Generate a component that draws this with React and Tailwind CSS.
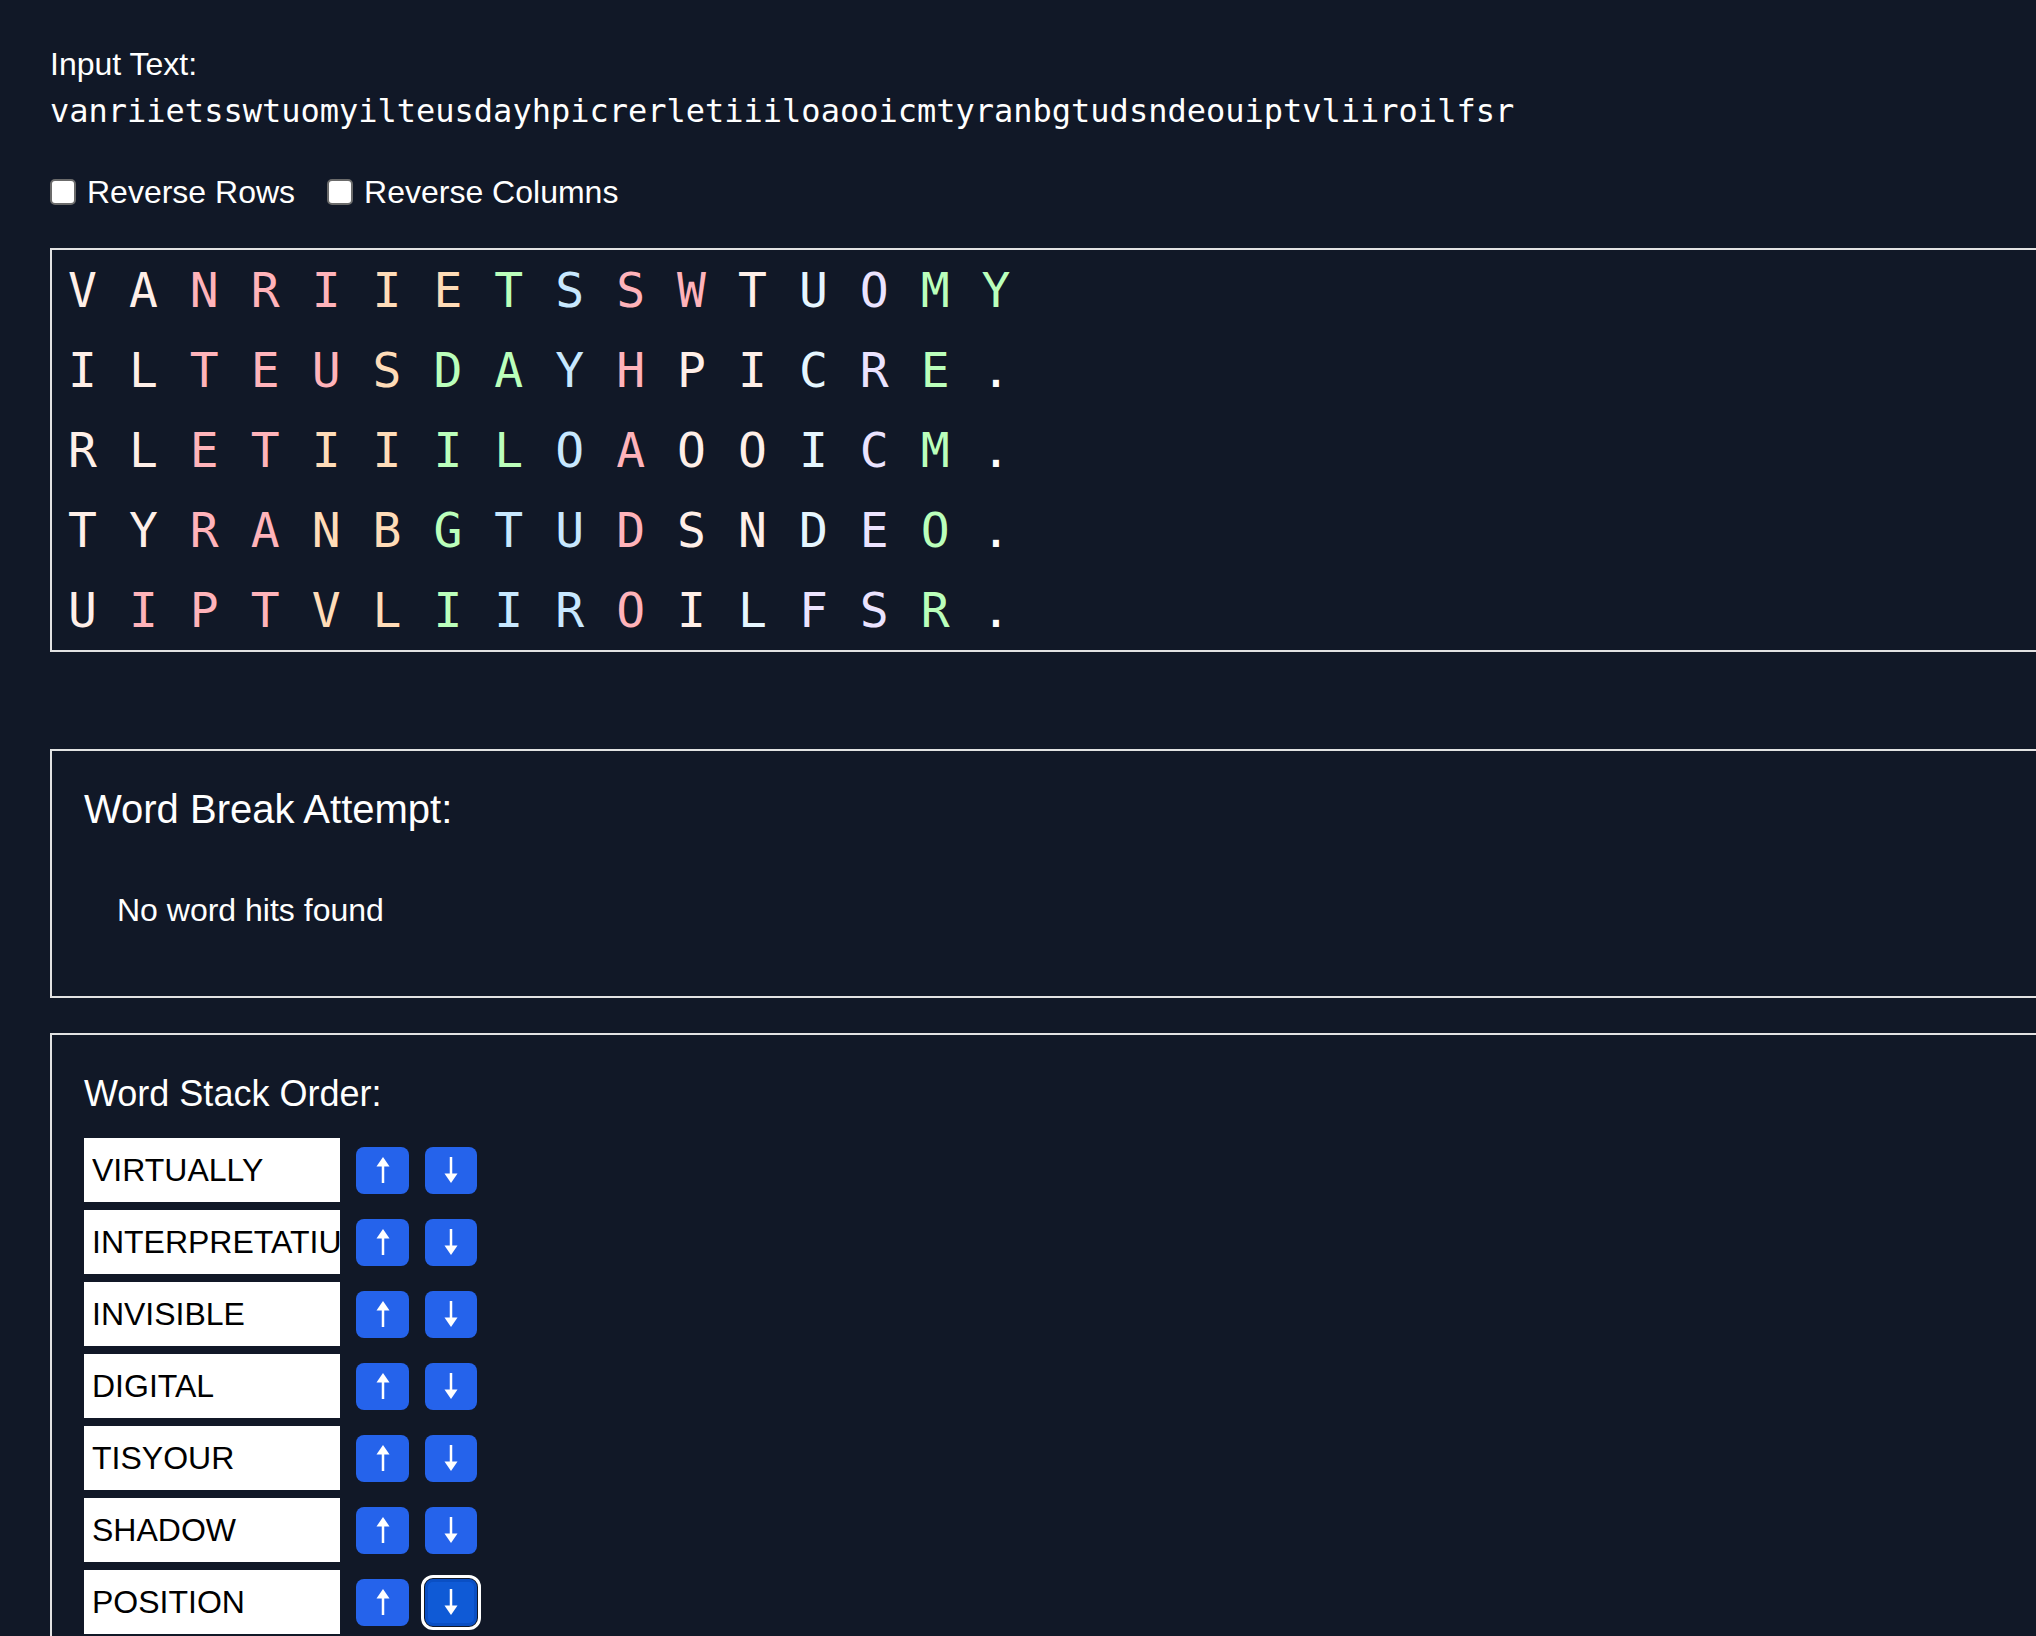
import { useState } from "react";

const COLORS = {
  c: "text-[#ffefe8]",
  p: "text-[#ffb3ba]",
  e: "text-[#ffdcb8]",
  g: "text-[#bbffbb]",
  b: "text-[#c8e8ff]",
  a: "text-[#e6f6ff]",
  l: "text-[#ebe3ff]",
  w: "text-white",
};

// grid letters with the colour key of every cell
const GRID = [
  ["VANRIIETSSWTUOMY", "ccpppeegbppcalgg"],
  ["ILTEUSDAYHPICRE.", "ccpppeggbpccalgw"],
  ["RLETIIILOAOOICM.", "ccppeeggbpccalgw"],
  ["TYRANBGTUDSNDEO.", "ccppeegbbpccalgw"],
  ["UIPTVLIIROILFSR.", "cpppeegbbpcallgw"],
];

const WORDS = ["VIRTUALLY", "INTERPRETATIUN", "INVISIBLE", "DIGITAL", "TISYOUR", "SHADOW", "POSITION"];

const INPUT = "vanriietsswtuomyilteusdayhpicrerletiiiloaooicmtyranbgtudsndeouiptvliiroilfsr";

const Checkbox = ({ label }) => (
  <label className="flex items-center mr-[32px]">
    <input
      type="checkbox"
      className="appearance-none w-[26px] h-[26px] bg-white border-2 border-[#6b6b6b] rounded-[5px] mr-[11px]"
    />
    <span>{label}</span>
  </label>
);

const Arrow = ({ down }) => (
  <svg width="16" height="26" viewBox="0 0 16 26" className={down ? "rotate-180" : ""}>
    <polygon points="8,0 14.5,9.5 1.5,9.5" fill="white" />
    <rect x="6.75" y="8" width="2.5" height="18" fill="white" />
  </svg>
);

const App = () => {
  const [words] = useState(WORDS);

  return (
    <div className="w-full h-[1636px] overflow-hidden bg-[#111827] text-white font-['Liberation_Sans',Arial,sans-serif]">
      <div className="pl-[50px] pt-[46px] w-[2400px]">
        <div className="text-[32px] leading-[36px]">Input Text:</div>
        <div className="mt-[10px] font-['DejaVu_Sans_Mono',monospace] text-[32px] leading-[38px]">{INPUT}</div>

        <div className="mt-[44px] flex items-center h-[36px] text-[32px] leading-[36px]">
          <Checkbox label="Reverse Rows" />
          <Checkbox label="Reverse Columns" />
        </div>

        {/* Letter grid */}
        <div className="mt-[38px] w-[2300px] border-2 border-[#e2e2e2] font-['DejaVu_Sans_Mono',monospace] text-[48px]">
          {GRID.map(([letters, colors], r) => (
            <div key={r} className="h-[80px] leading-[80px] whitespace-nowrap">
              {letters.split("").map((ch, i) => (
                <span key={i} className={`inline-block mx-4 ${COLORS[colors[i]]}`}>
                  {ch}
                </span>
              ))}
            </div>
          ))}
        </div>

        {/* Word break */}
        <div className="mt-[97px] w-[2300px] border-2 border-[#e2e2e2] pt-[34px] pb-[68px] px-[32px]">
          <h3 className="text-[40px] leading-[48px]">Word Break Attempt:</h3>
          <p className="mt-[59px] pl-[33px] text-[32px] leading-[36px]">No word hits found</p>
        </div>

        {/* Word stack */}
        <div className="mt-[35px] w-[2300px] border-2 border-[#e2e2e2] pt-[37px] pb-[40px] px-[32px]">
          <h3 className="text-[36px] leading-[43px]">Word Stack Order:</h3>
          <div className="mt-[23px] flex flex-col gap-[8px]">
            {words.map((w, i) => (
              <div key={w} className="flex items-center gap-[16px]">
                <input
                  readOnly
                  value={w}
                  className="w-[256px] h-[64px] bg-white text-black pl-[8px] pr-0 text-[32px] font-['Liberation_Sans',Arial,sans-serif] outline-none"
                />
                <button className="w-[53px] h-[47px] rounded-[8px] bg-[#2563eb] flex items-center justify-center">
                  <Arrow />
                </button>
                <button
                  className={
                    i === words.length - 1
                      ? "w-[52px] h-[47px] rounded-[8px] bg-[#0f5ad6] border-[3px] border-[#0a4fc4] outline-[3px] outline-white outline-offset-[1px] flex items-center justify-center"
                      : "w-[52px] h-[47px] rounded-[8px] bg-[#2563eb] flex items-center justify-center"
                  }
                >
                  <Arrow down />
                </button>
              </div>
            ))}
          </div>
        </div>
      </div>
    </div>
  );
};

export default App;
